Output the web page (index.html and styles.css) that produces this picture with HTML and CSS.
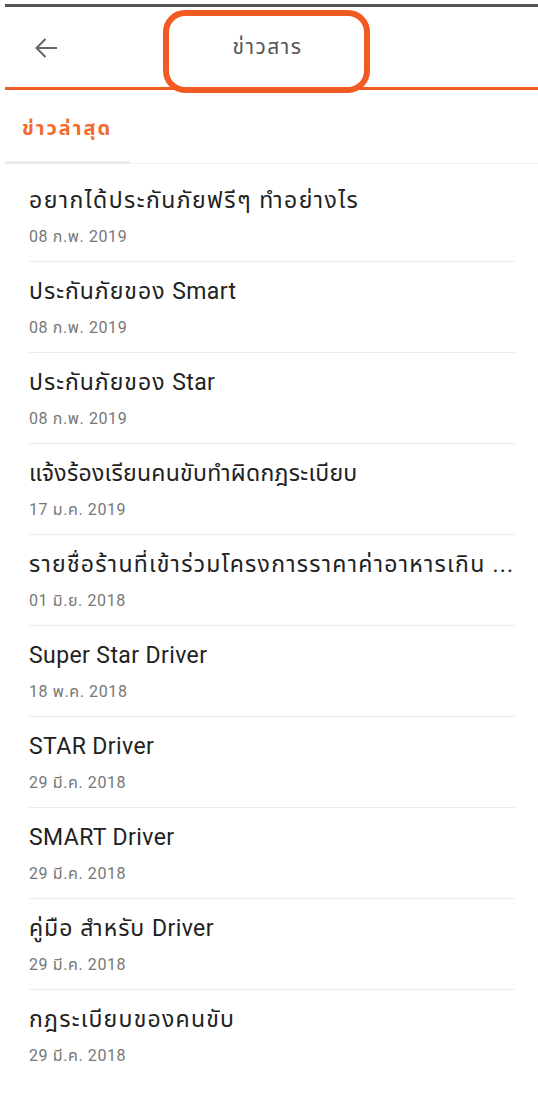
FILE: index.html
```html
<!DOCTYPE html>
<html lang="th">
<head>
<meta charset="utf-8">
<title>ข่าวสาร</title>
<link rel="stylesheet" href="styles.css">
</head>
<body>
<div class="page">
  <div class="topline"></div>
  <header class="header">
    <svg class="back" viewBox="0 0 24 24" width="24" height="24" aria-hidden="true">
      <path d="M23 12H2.5M11.5 3 2.5 12l9 9" fill="none" stroke="#666" stroke-width="2"/>
    </svg>
    <div class="title">ข่าวสาร</div>
    <div class="mark"></div>
  </header>
  <nav class="tabs">
    <div class="tab">ข่าวล่าสุด</div>
  </nav>
  <ul class="list">
    <li class="item"><div class="t t-wide">อยากได้ประกันภัยฟรีๆ ทำอย่างไร</div><div class="d">08 ก.พ. 2019</div></li>
    <li class="item"><div class="t">ประกันภัยของ <span class="en">Smart</span></div><div class="d">08 ก.พ. 2019</div></li>
    <li class="item"><div class="t">ประกันภัยของ <span class="en">Star</span></div><div class="d">08 ก.พ. 2019</div></li>
    <li class="item"><div class="t t-tight">แจ้งร้องเรียนคนขับทำผิดกฎระเบียบ</div><div class="d">17 ม.ค. 2019</div></li>
    <li class="item"><div class="t t-mid">รายชื่อร้านที่เข้าร่วมโครงการราคาค่าอาหารเกิน ...</div><div class="d">01 มิ.ย. 2018</div></li>
    <li class="item"><div class="t"><span class="en">Super Star Driver</span></div><div class="d">18 พ.ค. 2018</div></li>
    <li class="item"><div class="t"><span class="en">STAR Driver</span></div><div class="d">29 มี.ค. 2018</div></li>
    <li class="item"><div class="t"><span class="en">SMART Driver</span></div><div class="d">29 มี.ค. 2018</div></li>
    <li class="item"><div class="t">คู่มือ สำหรับ <span class="en">Driver</span></div><div class="d">29 มี.ค. 2018</div></li>
    <li class="item"><div class="t t-mid">กฎระเบียบของคนขับ</div><div class="d">29 มี.ค. 2018</div></li>
  </ul>
</div>
</body>
</html>
```
FILE: styles.css
```css
html, body {
  margin: 0;
  padding: 0;
  background: #fff;
}
body {
  font-family: Roboto, "Noto Sans Thai", "Noto Sans", "DejaVu Sans", sans-serif;
  color: #222;
}
.page {
  padding-left: 5px;
  width: 533px;
}
.topline {
  margin-top: 4px;
  height: 3px;
  background: #555;
}
.header {
  position: relative;
  height: 80px;
  border-bottom: 3px solid #f15a22;
  display: flex;
  align-items: center;
  justify-content: center;
}
.back {
  position: absolute;
  left: 29px;
  top: 29px;
}
.title {
  font-size: 21px;
  letter-spacing: 1.5px;
  color: #555;
  line-height: 26px;
  margin-top: 0;
  margin-left: -8px;
}
.mark {
  position: absolute;
  left: 158px;
  top: 3px;
  width: 195px;
  height: 71px;
  border: 6px solid #f15a22;
  border-radius: 22px;
}
.tabs {
  height: 73px;
  border-bottom: 1px solid #f0f0f0;
  display: flex;
}
.tab {
  width: 108px;
  padding-left: 17px;
  border-bottom: 3px solid #ebebeb;
  margin-bottom: -1px;
  font-size: 20px;
  letter-spacing: 2px;
  font-weight: bold;
  color: #f26b2e;
  line-height: 26px;
  padding-top: 25px;
  box-sizing: content-box;
  white-space: nowrap;
}
.list {
  list-style: none;
  margin: 0;
  padding: 7px 0 0 0;
}
.item {
  margin: 0 23px 0 24px;
  padding: 15px 0 13px;
  border-bottom: 1px solid #ececec;
}
.item:last-child {
  border-bottom: none;
}
.t {
  font-size: 23px;
  letter-spacing: 1px;
  line-height: 30px;
  color: #222;
  white-space: nowrap;
  overflow: hidden;
}
.t-wide {
  letter-spacing: 1.45px;
}
.t-mid {
  letter-spacing: 1.25px;
}
.t-tight {
  letter-spacing: 0.3px;
}
.en {
  letter-spacing: 0.4px;
}
.d {
  margin-top: 10px;
  font-size: 16px;
  letter-spacing: 0.6px;
  line-height: 22px;
  color: #777;
}
```
